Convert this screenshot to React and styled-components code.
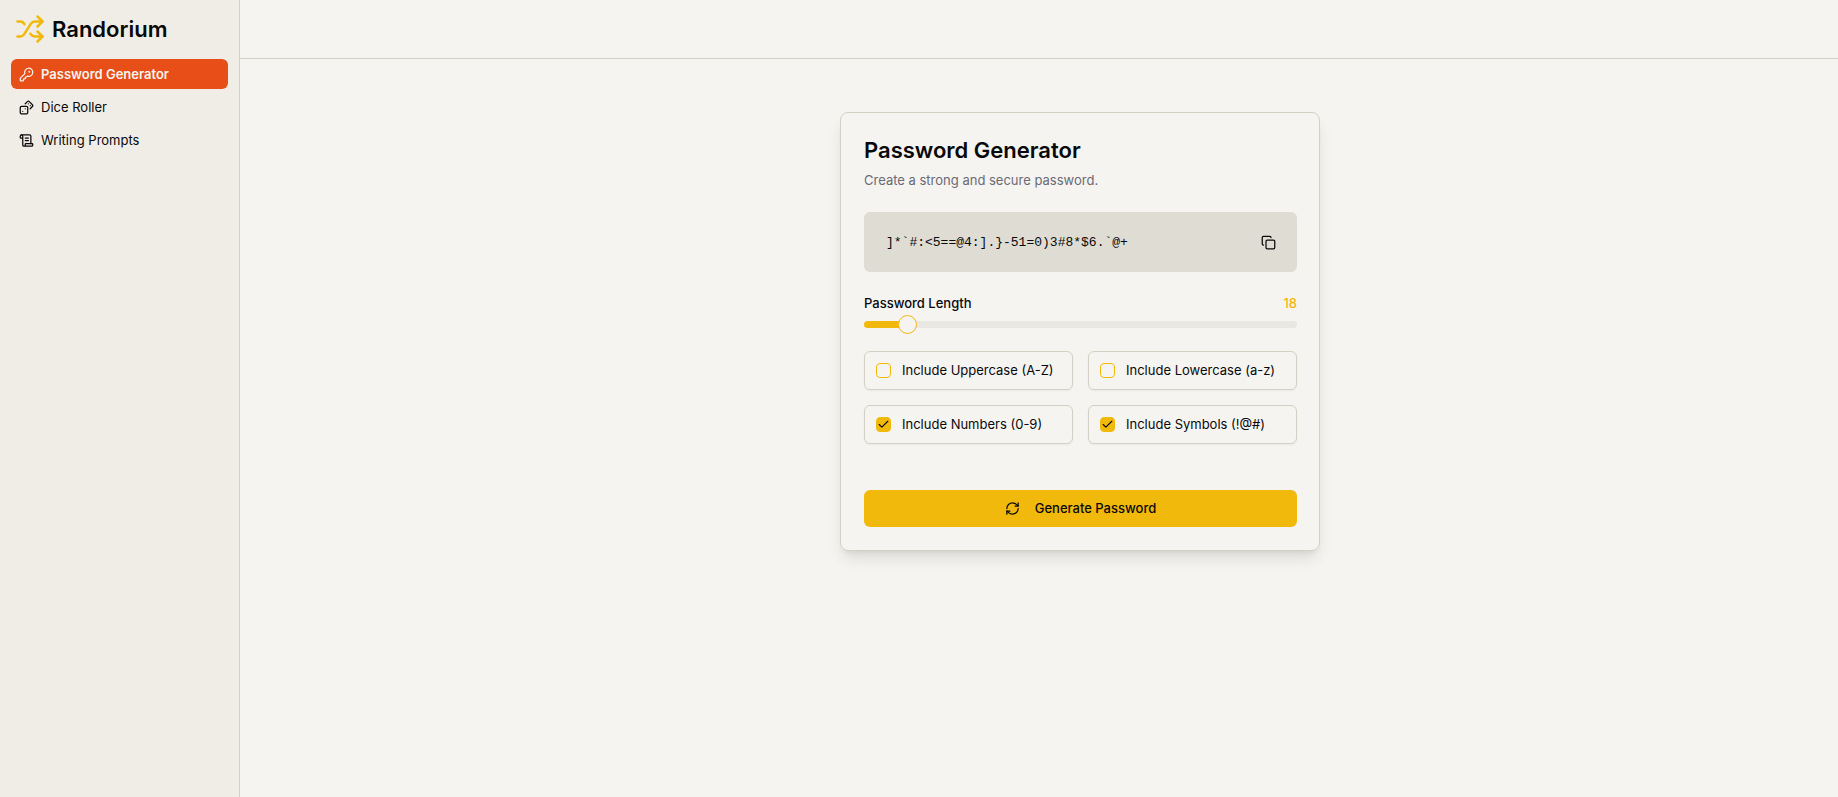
import React, { useState } from "react";
import styled, { createGlobalStyle, css } from "styled-components";
import { Shuffle, KeyRound, Dices, ScrollText, Copy, RefreshCw, Check } from "lucide-react";

const color = {
  page: "#f5f4f0",
  sidebar: "#f0ede6",
  border: "#d3d1c4",
  muted: "#dedcd3",
  track: "#e8e7e2",
  text: "#09090b",
  subtle: "#6b6a75",
  primary: "#f2b90d",
  accent: "#e84e17",
};

const GlobalStyle = createGlobalStyle`
  *, *::before, *::after { box-sizing: border-box; }
  body {
    margin: 0;
    background: ${color.page};
    color: ${color.text};
    font-family: Inter, "Liberation Sans", sans-serif;
    font-size: 13px;
    line-height: 19px;
  }
  button, input { font: inherit; color: inherit; }
`;

const Shell = styled.div`
  display: grid;
  grid-template-columns: 240px minmax(0, 1fr);
  min-height: 100vh;
`;

const Sidebar = styled.aside`
  background: ${color.sidebar};
  border-right: 1px solid ${color.border};
`;

const Brand = styled.a`
  display: flex;
  align-items: center;
  gap: 7px;
  height: 59px;
  padding: 0 15px 2px;
  color: inherit;
  text-decoration: none;
  font-size: 22px;
  font-weight: 600;
  line-height: 30px;

  svg { color: ${color.primary}; }
`;

const Nav = styled.nav`
  display: flex;
  flex-direction: column;
  gap: 3px;
  padding: 0 11px;
`;

const NavLink = styled.a`
  display: flex;
  align-items: center;
  gap: 7px;
  height: 30px;
  padding: 0 8px;
  border-radius: 6px;
  color: inherit;
  text-decoration: none;
  ${({ $active }) =>
    $active &&
    css`
      background: ${color.accent};
      color: ${color.page};
      font-weight: 600;
    `}
`;

const Content = styled.div`
  display: flex;
  flex-direction: column;
`;

const TopBar = styled.header`
  height: 59px;
  border-bottom: 1px solid ${color.border};
`;

const Main = styled.main`
  display: flex;
  justify-content: center;
  align-items: flex-start;
  padding: 53px 0 30px 82px;
`;

const Card = styled.section`
  width: 100%;
  max-width: 480px;
  padding: 23px 22px 23px 23px;
  border: 1px solid ${color.border};
  border-radius: 8px;
  box-shadow: 0 10px 15px -3px rgba(0, 0, 0, 0.1), 0 4px 6px -4px rgba(0, 0, 0, 0.1);
`;

const Title = styled.h1`
  margin: 0;
  font-size: 22px;
  font-weight: 600;
  line-height: 28px;
`;

const Description = styled.p`
  margin: 7px 0 22px;
  color: ${color.subtle};
`;

const PasswordBox = styled.div`
  display: flex;
  align-items: center;
  justify-content: space-between;
  height: 60px;
  padding: 0 10px 0 22px;
  border-radius: 6px;
  background: ${color.muted};
`;

const Password = styled.output`
  font-family: "Liberation Mono", monospace;
`;

const IconButton = styled.button`
  display: grid;
  place-items: center;
  width: 37px;
  height: 37px;
  padding: 0;
  border: 0;
  border-radius: 6px;
  background: none;
  cursor: pointer;
`;

const LengthRow = styled.div`
  display: flex;
  justify-content: space-between;
  margin-top: 22px;
  font-weight: 500;

  output { color: ${color.primary}; }
`;

const thumb = css`
  width: 19px;
  height: 19px;
  border: 1px solid ${color.primary};
  border-radius: 50%;
  background: ${color.page};
`;

const Slider = styled.input`
  appearance: none;
  display: block;
  width: 100%;
  height: 19px;
  margin: 2px 0 17px;
  background: none;
  cursor: pointer;

  &::-webkit-slider-runnable-track {
    height: 7px;
    border-radius: 4px;
    background: linear-gradient(
      to right,
      ${color.primary} var(--filled),
      ${color.track} var(--filled)
    );
  }
  &::-webkit-slider-thumb {
    appearance: none;
    margin-top: -6px;
    ${thumb}
  }
  &::-moz-range-track {
    height: 7px;
    border-radius: 4px;
    background: ${color.track};
  }
  &::-moz-range-thumb {
    box-sizing: border-box;
    ${thumb}
  }
`;

const Options = styled.div`
  display: grid;
  grid-template-columns: 1fr 1fr;
  gap: 15px;
`;

const Option = styled.label`
  display: flex;
  align-items: center;
  gap: 11px;
  height: 39px;
  padding: 0 11px;
  border: 1px solid ${color.border};
  border-radius: 6px;
  box-shadow: 0 1px 2px rgba(0, 0, 0, 0.05);
  cursor: pointer;
`;

const Tick = styled.span`
  display: grid;
  place-items: center;

  > * { grid-area: 1 / 1; }
  svg { pointer-events: none; }
`;

const Checkbox = styled.input`
  appearance: none;
  width: 15px;
  height: 15px;
  margin: 0;
  border: 1px solid ${color.primary};
  border-radius: 4px;

  &:checked { background: ${color.primary}; }
`;

const GenerateButton = styled.button`
  display: flex;
  align-items: center;
  justify-content: center;
  gap: 15px;
  width: 100%;
  height: 37px;
  margin-top: 46px;
  padding: 0;
  border: 0;
  border-radius: 6px;
  background: ${color.primary};
  font-weight: 500;
  cursor: pointer;
`;

const links = [
  { label: "Password Generator", icon: KeyRound, href: "#password", active: true },
  { label: "Dice Roller", icon: Dices, href: "#dice" },
  { label: "Writing Prompts", icon: ScrollText, href: "#prompts" },
];

const sets = [
  { key: "upper", label: "Include Uppercase (A-Z)", chars: "ABCDEFGHIJKLMNOPQRSTUVWXYZ" },
  { key: "lower", label: "Include Lowercase (a-z)", chars: "abcdefghijklmnopqrstuvwxyz" },
  { key: "numbers", label: "Include Numbers (0-9)", chars: "0123456789" },
  { key: "symbols", label: "Include Symbols (!@#)", chars: "!@#$%^&*()_+-=[]{}|;:,.<>?`~" },
];

const MIN = 8;
const MAX = 128;

export default function App() {
  const [password, setPassword] = useState("]*`#:<5==@4:].}-51=0)3#8*$6.`@+");
  const [length, setLength] = useState(18);
  const [enabled, setEnabled] = useState({ upper: false, lower: false, numbers: true, symbols: true });

  const generate = () => {
    const pool = sets.filter((s) => enabled[s.key]).map((s) => s.chars).join("");
    if (!pool) return;
    const values = crypto.getRandomValues(new Uint32Array(length));
    setPassword(Array.from(values, (n) => pool[n % pool.length]).join(""));
  };

  return (
    <>
      <GlobalStyle />
      <Shell>
        <Sidebar>
          <Brand href="#home">
            <Shuffle size={30} />
            Randorium
          </Brand>
          <Nav>
            {links.map(({ label, icon: Icon, href, active }) => (
              <NavLink key={label} href={href} $active={active}>
                <Icon size={15} />
                {label}
              </NavLink>
            ))}
          </Nav>
        </Sidebar>
        <Content>
          <TopBar />
          <Main>
            <Card>
              <Title>Password Generator</Title>
              <Description>Create a strong and secure password.</Description>
              <PasswordBox>
                <Password>{password}</Password>
                <IconButton aria-label="Copy password" onClick={() => navigator.clipboard?.writeText(password)}>
                  <Copy size={15} />
                </IconButton>
              </PasswordBox>
              <LengthRow>
                <label htmlFor="length">Password Length</label>
                <output htmlFor="length">{length}</output>
              </LengthRow>
              <Slider
                id="length"
                type="range"
                min={MIN}
                max={MAX}
                value={length}
                onChange={(e) => setLength(Number(e.target.value))}
                style={{ "--filled": `${((length - MIN) / (MAX - MIN)) * 92 + 4}%` }}
              />
              <Options>
                {sets.map(({ key, label }) => (
                  <Option key={key}>
                    <Tick>
                      <Checkbox
                        type="checkbox"
                        checked={enabled[key]}
                        onChange={(e) => setEnabled({ ...enabled, [key]: e.target.checked })}
                      />
                      {enabled[key] && <Check size={13} />}
                    </Tick>
                    {label}
                  </Option>
                ))}
              </Options>
              <GenerateButton type="button" onClick={generate}>
                <RefreshCw size={15} />
                Generate Password
              </GenerateButton>
            </Card>
          </Main>
        </Content>
      </Shell>
    </>
  );
}
